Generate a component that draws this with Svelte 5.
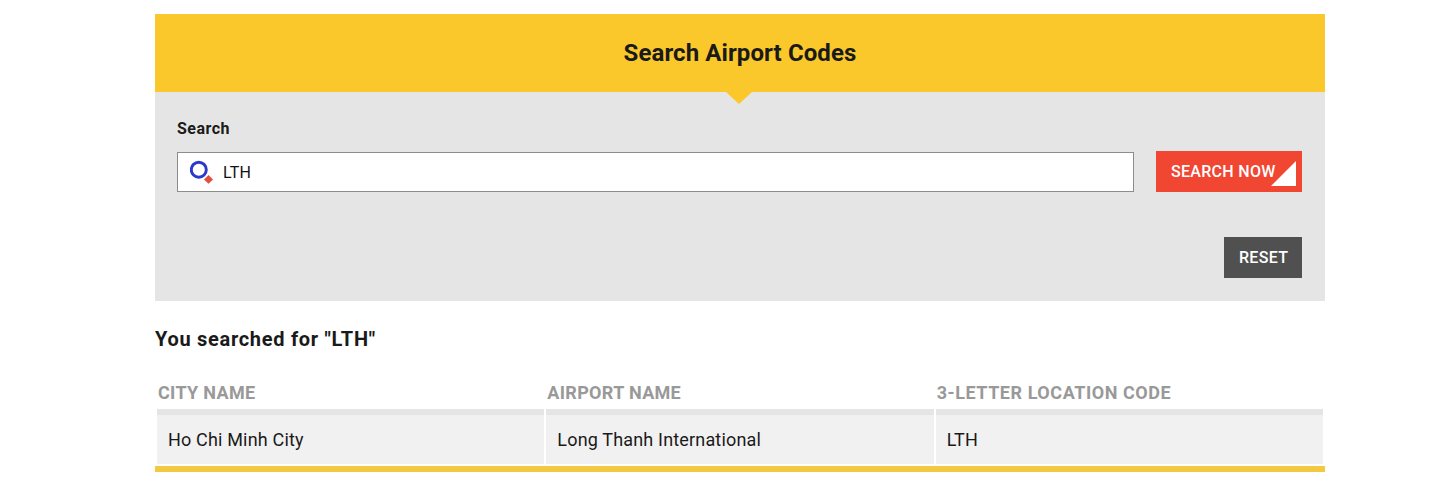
<script lang="ts">
	let query = 'LTH';
	let searched = 'LTH';

	const airports = [{ city: 'Ho Chi Minh City', name: 'Long Thanh International', code: 'LTH' }];

	$: results = airports.filter((a) => a.code === searched.toUpperCase());

	const search = () => {
		searched = query;
	};
	const reset = () => {
		query = '';
		searched = '';
	};
</script>

<main>
	<header>
		<h1>Search Airport Codes</h1>
	</header>
	<form on:submit|preventDefault={search} on:reset|preventDefault={reset}>
		<label for="query">Search</label>
		<div class="row">
			<div class="field">
				<svg width="24" height="24" viewBox="0 0 24 24" aria-hidden="true">
					<circle cx="8.8" cy="9.7" r="7.5" fill="none" stroke="#2b39cc" stroke-width="2.9" />
					<path d="M18.5 15l4.5 4.4-4.5 4.4-4.5-4.4z" fill="#e2503b" />
				</svg>
				<input id="query" type="text" autocomplete="off" bind:value={query} />
			</div>
			<button class="submit" type="submit">SEARCH NOW</button>
		</div>
		<button class="reset" type="reset">RESET</button>
	</form>

	<h2>You searched for "{searched}"</h2>
	<table>
		<thead>
			<tr>
				<th>City name</th>
				<th>Airport name</th>
				<th class="code">3-letter location code</th>
			</tr>
		</thead>
		<tbody>
			{#each results as { city, name, code }}
				<tr>
					<td>{city}</td>
					<td>{name}</td>
					<td>{code}</td>
				</tr>
			{/each}
		</tbody>
	</table>
</main>

<style>
	:global(body) {
		background: #fff;
	}
	main {
		box-sizing: border-box;
		width: 1170px;
		margin-left: 155px;
		padding-top: 14px;
		font-family: Roboto, 'Liberation Sans', sans-serif;
		color: #1a1a1a;
	}
	header {
		position: relative;
		height: 78px;
		display: flex;
		align-items: center;
		justify-content: center;
		background: #fac82a;
	}
	/* pointer into the form */
	header::after {
		content: '';
		position: absolute;
		top: 100%;
		left: 571px;
		border: 13px solid transparent;
		border-top: 12px solid #fac82a;
		border-bottom: 0;
	}
	h1 {
		margin: 0;
		font-size: 24px;
		line-height: 28px;
		font-weight: 700;
		letter-spacing: 0.1px;
	}
	form {
		box-sizing: border-box;
		height: 209px;
		padding: 27px 23px 0 22px;
		display: flex;
		flex-direction: column;
		background: #e5e5e5;
	}
	label {
		font-size: 16px;
		line-height: 20px;
		font-weight: 700;
		letter-spacing: 0.5px;
	}
	.row {
		display: flex;
		align-items: flex-end;
		justify-content: space-between;
		margin-top: 12px;
	}
	.field {
		box-sizing: border-box;
		width: 957px;
		height: 40px;
		padding-left: 12px;
		display: flex;
		align-items: center;
		background: #fff;
		border: 1px solid #8c8c8c;
	}
	input {
		flex: 1;
		margin-left: 9px;
		padding: 2px 0 0;
		border: 0;
		outline: 0;
		background: none;
		color: #111;
		font: 16px/20px Roboto, 'Liberation Sans', sans-serif;
		letter-spacing: 0.2px;
	}
	button {
		box-sizing: border-box;
		height: 41px;
		padding: 0 0 0 15px;
		border: 0;
		text-align: left;
		color: #fff;
		font: 500 16px/20px Roboto, 'Liberation Sans', sans-serif;
		letter-spacing: 0.3px;
	}
	.submit {
		position: relative;
		width: 146px;
		background: #f04632;
	}
	.submit::after {
		content: '';
		position: absolute;
		right: 6px;
		bottom: 6px;
		width: 25px;
		height: 25px;
		background: #fff;
		clip-path: polygon(100% 0, 100% 100%, 0 100%);
	}
	.reset {
		align-self: flex-end;
		width: 78px;
		margin-top: 45px;
		background: #505050;
	}
	h2 {
		margin: 26px 0 0;
		font-size: 20px;
		line-height: 24px;
		font-weight: 700;
		letter-spacing: 0.7px;
	}
	table {
		width: 100%;
		margin-top: 20px;
		table-layout: fixed;
		border-spacing: 2px;
		border-bottom: 6px solid #f5c842;
	}
	th {
		height: 34px;
		box-sizing: border-box;
		padding: 6px 1px 0;
		text-align: left;
		text-transform: uppercase;
		color: #999;
		font-size: 18px;
		line-height: 22px;
		font-weight: 700;
		letter-spacing: 0.32px;
	}
	.code {
		letter-spacing: 0.55px;
	}
	td {
		box-sizing: border-box;
		height: 55px;
		padding: 0 11px;
		border-top: 6px solid #e5e5e5;
		background: #f1f1f1;
		font-size: 18px;
		line-height: 22px;
		letter-spacing: 0.17px;
	}
</style>
